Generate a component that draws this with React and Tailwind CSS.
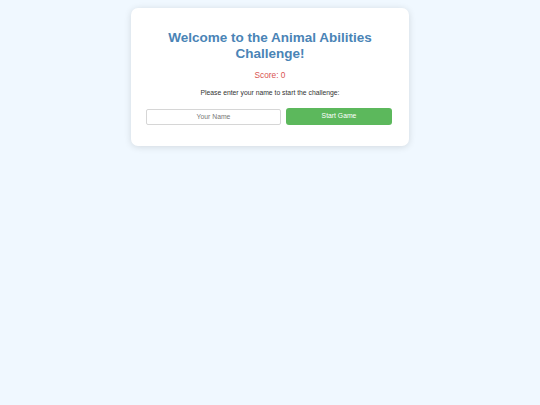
import React, { useState } from "react";

export default function App() {
  const [name, setName] = useState("");

  return (
    <div className="min-h-screen bg-[#f0f8ff] font-['Liberation_Sans',Arial,sans-serif]">
      <div className="pt-[8px] flex justify-center">
        {/* Game card */}
        <div className="w-[278px] bg-white rounded-[7px] shadow-[0_1px_7px_rgba(0,0,0,0.13)] px-[15px] pt-[22px] pb-[21px] text-center">
          <h1 className="text-[13.5px] leading-[15.5px] font-bold text-[#4a84b6]">
            Welcome to the Animal Abilities Challenge!
          </h1>
          <div className="mt-[10px] text-[8.3px] leading-[9px] text-[#d9534f]">Score: 0</div>
          <p className="mt-[9px] text-[6.8px] leading-[8px] text-[#333]">
            Please enter your name to start the challenge:
          </p>
          <div className="mt-[11px] flex gap-[5px] items-center">
            <input
              value={name}
              onChange={(e) => setName(e.target.value)}
              placeholder="Your Name"
              className="w-[135px] h-[16px] border border-[#d6d6d6] rounded-[2px] text-center text-[6.8px] text-[#333] placeholder:text-[#777] outline-none"
            />
            <button className="w-[106px] h-[17px] rounded-[3px] bg-[#5cb85c] text-white text-[6.8px]">
              Start Game
            </button>
          </div>
        </div>
      </div>
    </div>
  );
}
